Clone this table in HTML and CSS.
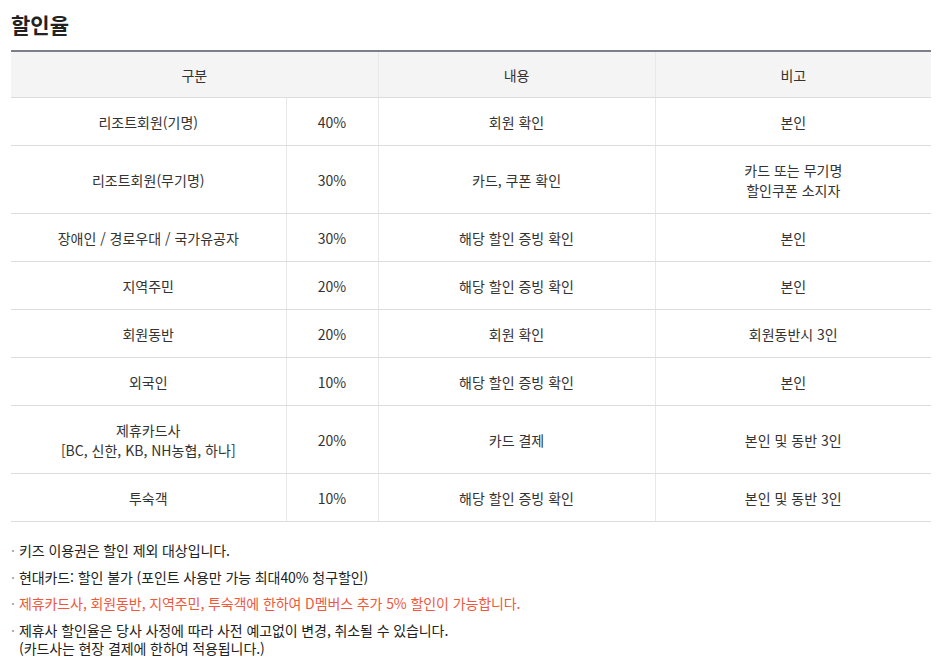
FILE: index.html
```html
<!DOCTYPE html>
<html lang="ko">
<head>
<meta charset="utf-8">
<link rel="stylesheet" href="styles.css">
</head>
<body>
<h2 class="title">할인율</h2>
<table class="rate">
  <colgroup>
    <col class="c1"><col class="c2"><col class="c3"><col class="c4">
  </colgroup>
  <thead>
    <tr><th colspan="2">구분</th><th>내용</th><th>비고</th></tr>
  </thead>
  <tbody>
    <tr><td>리조트회원(기명)</td><td>40%</td><td>회원 확인</td><td>본인</td></tr>
    <tr><td>리조트회원(무기명)</td><td>30%</td><td>카드, 쿠폰 확인</td><td>카드 또는 무기명<br>할인쿠폰 소지자</td></tr>
    <tr><td>장애인 / 경로우대 / 국가유공자</td><td>30%</td><td>해당 할인 증빙 확인</td><td>본인</td></tr>
    <tr><td>지역주민</td><td>20%</td><td>해당 할인 증빙 확인</td><td>본인</td></tr>
    <tr><td>회원동반</td><td>20%</td><td>회원 확인</td><td>회원동반시 3인</td></tr>
    <tr><td>외국인</td><td>10%</td><td>해당 할인 증빙 확인</td><td>본인</td></tr>
    <tr><td>제휴카드사<br>[BC, 신한, KB, NH농협, 하나]</td><td>20%</td><td>카드 결제</td><td>본인 및 동반 3인</td></tr>
    <tr><td>투숙객</td><td>10%</td><td>해당 할인 증빙 확인</td><td>본인 및 동반 3인</td></tr>
  </tbody>
</table>
<ul class="notes">
  <li>키즈 이용권은 할인 제외 대상입니다.</li>
  <li>현대카드: 할인 불가 (포인트 사용만 가능 최대40% 청구할인)</li>
  <li class="red">제휴카드사, 회원동반, 지역주민, 투숙객에 한하여 D멤버스 추가 5% 할인이 가능합니다.</li>
  <li>제휴사 할인율은 당사 사정에 따라 사전 예고없이 변경, 취소될 수 있습니다.<br>(카드사는 현장 결제에 한하여 적용됩니다.)</li>
</ul>
</body>
</html>
```

FILE: styles.css
```css
html, body {
  margin: 0;
  padding: 0;
  background: #fff;
}
body {
  padding: 0 18px 0 11px;
  font-family: "Malgun Gothic", "Noto Sans CJK KR", "Noto Sans", sans-serif;
  color: #333;
  font-size: 14px;
}
.title {
  margin: 0;
  padding-top: 10px;
  font-size: 21px;
  line-height: 28px;
  font-weight: 700;
  color: #222;
}
.rate {
  margin-top: 12px;
  width: 920px;
  border-collapse: collapse;
  table-layout: fixed;
  border-top: 2px solid #7b7f8a;
}
.c1 { width: 275px; }
.c2 { width: 92px; }
.c3 { width: 277px; }
.c4 { width: 276px; }
.rate th {
  background: #f4f4f4;
  font-weight: 400;
  color: #333;
  padding: 13px 6px 12px;
  line-height: 20px;
  border-bottom: 1px solid #dcdcdc;
  border-left: 1px solid #e8e8e8;
}
.rate td {
  text-align: center;
  padding: 14px 6px 13px;
  line-height: 20px;
  border-bottom: 1px solid #dcdcdc;
  border-left: 1px solid #e8e8e8;
}
.rate th:first-child,
.rate td:first-child {
  border-left: none;
}
.notes {
  list-style: none;
  margin: 19px 0 0;
  padding: 0;
  color: #222;
}
.notes li {
  position: relative;
  padding-left: 8px;
  line-height: 18px;
  margin-bottom: 8.7px;
  letter-spacing: -0.1px;
}
.notes li::before {
  content: "·";
  position: absolute;
  left: 0;
  top: 0;
  color: #999;
}
.notes li.red {
  color: #f0573c;
}
```
